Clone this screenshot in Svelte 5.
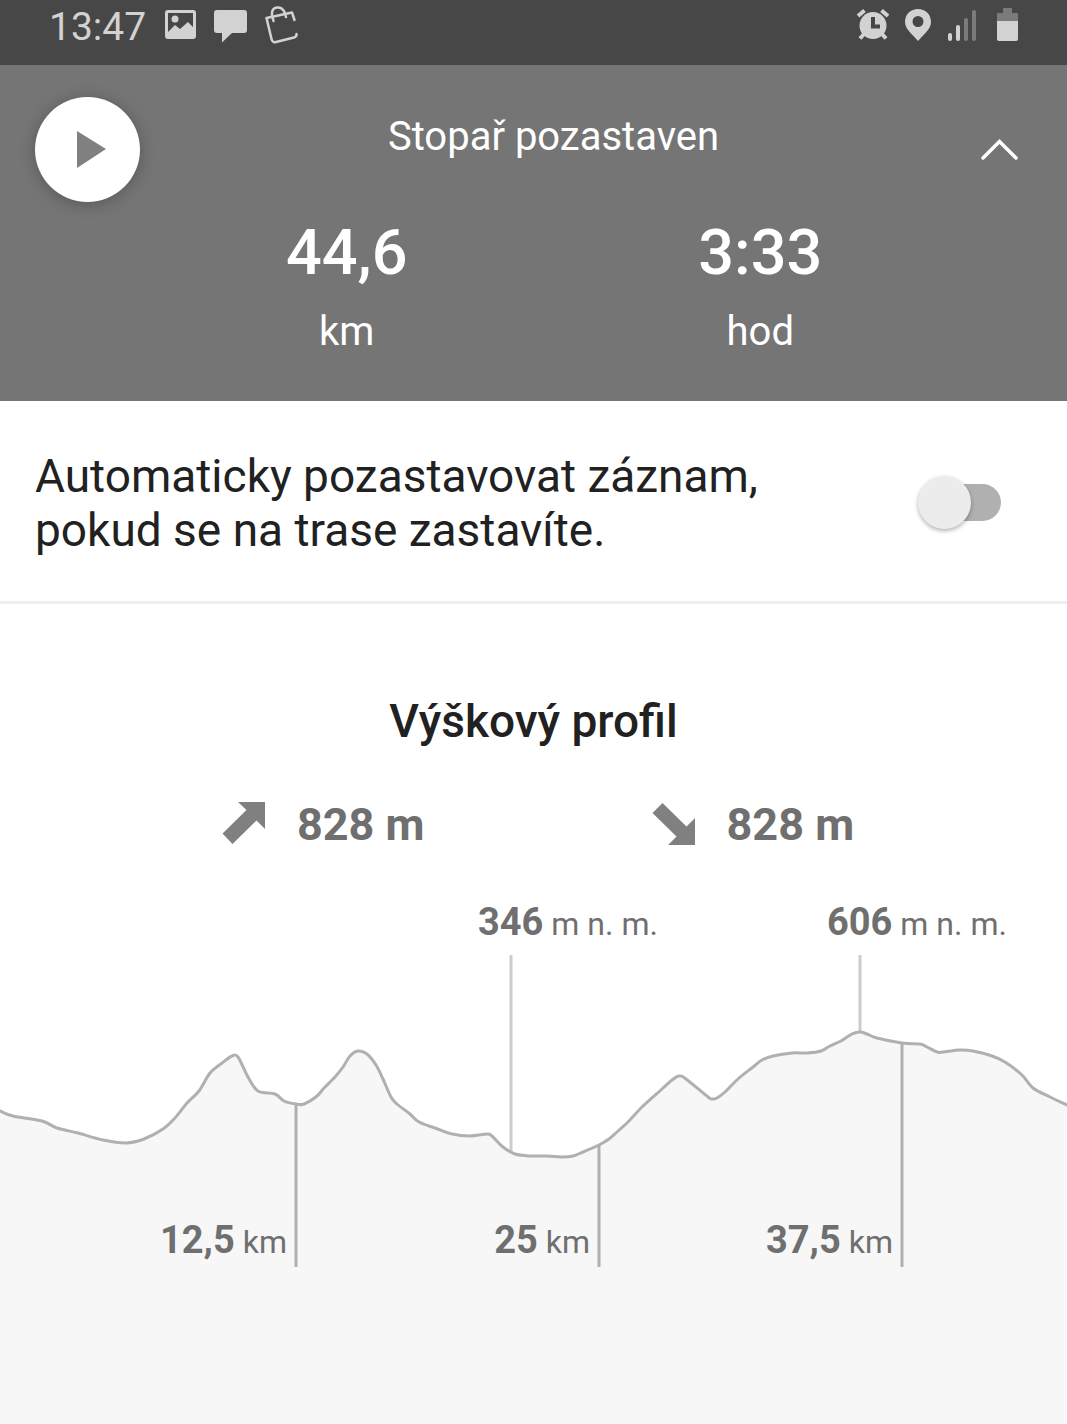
<svelte:head>
	<title>Stopař</title>
</svelte:head>

<script>
	let paused = $state(true);
	let expanded = $state(true);
	let autoPause = $state(false);

	const chartHeight = 544;

	const points = [
		[-4, 230], [0, 231], [13, 236], [42, 241], [57, 248], [78, 253], [103, 260], [126, 263],
		[144, 259], [163, 249], [175, 238], [187, 223], [199, 211], [210, 193], [222, 183],
		[232, 176], [238, 177], [248, 197], [258, 211], [275, 214], [284, 221], [296, 224],
		[304, 224], [317, 216], [324, 208], [335, 197], [343, 187], [350, 176], [358, 171],
		[367, 174], [376, 185], [383, 199], [391, 217], [397, 224], [410, 234], [419, 242],
		[435, 248], [452, 254], [470, 256], [487, 254], [492, 256], [503, 267], [515, 274],
		[531, 276], [547, 276], [563, 277], [573, 276], [583, 272], [599, 265],
		[609, 259], [617, 252], [628, 242], [642, 227], [662, 209], [672, 200], [679, 196],
		[686, 199], [708, 217], [712, 219], [717, 218], [725, 212], [738, 199], [753, 187],
		[762, 180], [773, 176], [792, 173], [807, 173], [821, 171], [830, 166], [841, 161],
		[852, 154], [860, 152], [867, 154], [877, 158], [902, 163], [920, 164], [927, 167],
		[937, 172], [943, 172], [960, 170], [973, 171], [992, 176], [1005, 182], [1022, 195],
		[1033, 208], [1050, 217], [1067, 225], [1071, 227]
	];

	const peaks = [
		{ x: 511, y: 272, label: '346' },
		{ x: 860, y: 151, label: '606' }
	];

	const distances = [
		{ x: 296, y: 224, label: '12,5' },
		{ x: 599, y: 265, label: '25' },
		{ x: 902, y: 163, label: '37,5' }
	];

	// smooth curve through all points
	function curve(p) {
		let d = `M${p[0][0]},${p[0][1]}`;
		for (let i = 0; i < p.length - 1; i++) {
			const a = p[i - 1] || p[i];
			const b = p[i];
			const c = p[i + 1];
			const e = p[i + 2] || c;
			d += `C${b[0] + (c[0] - a[0]) / 6},${b[1] + (c[1] - a[1]) / 6} ${c[0] - (e[0] - b[0]) / 6},${c[1] - (e[1] - b[1]) / 6} ${c[0]},${c[1]}`;
		}
		return d;
	}

	const line = curve(points);
	const area = `${line}V${chartHeight}H-4Z`;
</script>

<div class="app">
	<div class="status">
		<span class="clock">13:47</span>
		<svg class="picture" width="32" height="30" viewBox="0 0 32 30">
			<path fill="#d2d2d2" fill-rule="evenodd" d="M3 0H28Q31 0 31 3V26Q31 29 28 29H3Q0 29 0 26V3Q0 0 3 0ZM3 3V22L10 15L15 19L23 12L28 17V3Z" />
			<circle cx="10" cy="9" r="3.5" fill="#d2d2d2" />
		</svg>
		<svg class="bubble" width="34" height="33" viewBox="0 0 34 33">
			<path fill="#d2d2d2" d="M3 0H30Q33 0 33 3V20Q33 23 30 23H18L8 32.500V23H3Q0 23 0 20V3Q0 0 3 0Z" />
		</svg>
		<svg class="bag" width="34" height="38" viewBox="0 0 34 38" fill="none" stroke="#d2d2d2" stroke-width="2.5" stroke-linecap="round" stroke-linejoin="round">
			<path d="M29.500 14L27 6.500L1.500 12L6.500 33Q7.500 37 11 36L29 31.500Q32 30.500 31.500 28" />
			<path d="M8.500 15L7 9Q6.500 2 12 1.500Q17 1 19.500 6L21 11" />
		</svg>
		<div class="spacer"></div>
		<svg class="alarm" width="34" height="32" viewBox="0 0 34 32">
			<circle cx="17" cy="17.500" r="13.500" fill="#d2d2d2" />
			<path d="M2 8L8.500 2.500M32 8L25.500 2.500M8 26L4 30.500M26 26L30 30.500" stroke="#d2d2d2" stroke-width="4" />
			<path d="M17 9V18.500H24" fill="none" stroke="#474747" stroke-width="4" />
		</svg>
		<svg class="pin" width="26" height="32" viewBox="0 0 26 32">
			<path fill="#d2d2d2" fill-rule="evenodd" d="M13 0C6 0 0 5 0 13C0 20 7 25 13 32C19 25 26 20 26 13C26 5 20 0 13 0ZM13 7A5.500 5.500 0 1 1 13 18A5.500 5.500 0 1 1 13 7Z" />
		</svg>
		<svg class="signal" width="28" height="32" viewBox="0 0 28 32">
			<rect x="0" y="23" width="4" height="8" rx="2" fill="#d2d2d2" />
			<rect x="8" y="15" width="4" height="16" rx="2" fill="#d2d2d2" />
			<rect x="16" y="8" width="4" height="23" rx="2" fill="#7b7b7b" />
			<rect x="24" y="0" width="4" height="31" rx="2" fill="#7b7b7b" />
		</svg>
		<svg class="battery" width="21" height="33" viewBox="0 0 21 33">
			<path fill="#7b7b7b" d="M6 5V1Q6 0 7 0H14Q15 0 15 1V5H20Q21 5 21 6V13H0V6Q0 5 1 5Z" />
			<path fill="#d2d2d2" d="M0 13H21V31Q21 33 19 33H2Q0 33 0 31Z" />
		</svg>
	</div>

	<header>
		<button class="play" aria-label="Pokračovat" onclick={() => (paused = !paused)}>
			<svg width="29" height="37" viewBox="0 0 29 37"><path d="M0 0L29 18L0 37Z" fill="#808080" /></svg>
		</button>
		<div class="tracker">
			<h1>Stopař pozastaven</h1>
			<div class="stats">
				<div class="stat"><strong>44,6</strong><span>km</span></div>
				<div class="stat"><strong>3:33</strong><span>hod</span></div>
			</div>
		</div>
		<button class="collapse" aria-label="Sbalit" aria-expanded={expanded} onclick={() => (expanded = !expanded)}>
			<svg width="38" height="24" viewBox="0 0 38 24"><path d="M3 21L19.500 4.500L36 21" fill="none" stroke="#fff" stroke-width="3.5" stroke-linecap="round" /></svg>
		</button>
	</header>

	<div class="setting">
		<label for="auto_pause">Automaticky pozastavovat záznam, pokud se na trase zastavíte.</label>
		<input id="auto_pause" class="switch" type="checkbox" role="switch" bind:checked={autoPause}>
	</div>

	<section>
		<h2>Výškový profil</h2>
		<div class="climbs">
			<div class="climb">
				<svg width="52" height="48" viewBox="0 0 52 48"><path d="M25 1H52V28L43.500 19.500L19.500 43L9.500 32.500L33.500 9Z" fill="#808080" /></svg>
				<strong>828 m</strong>
			</div>
			<div class="climb">
				<svg width="52" height="48" viewBox="0 0 52 48"><path d="M25 44H52V17L43.500 25.500L19.500 2L9.500 12L33.500 35.500Z" fill="#808080" /></svg>
				<strong>828 m</strong>
			</div>
		</div>
		<svg class="chart" viewBox="0 0 1067 {chartHeight}">
			<path d={area} fill="#f7f7f7" />
			{#each peaks as p}
				<line x1={p.x} x2={p.x} y1="75" y2={p.y} stroke="#cccccc" stroke-width="3" />
				<text x={p.x - 33} y="55"><tspan class="value">{p.label}</tspan> m n. m.</text>
			{/each}
			{#each distances as d}
				<line x1={d.x} x2={d.x} y1={d.y} y2="387" stroke="#b0b0b0" stroke-width="3" />
				<text x={d.x - 9} y="373" text-anchor="end"><tspan class="value">{d.label}</tspan> km</text>
			{/each}
			<path d={line} fill="none" stroke="#b0b0b0" stroke-width="3" />
		</svg>
	</section>
</div>

<style>
	:global(body) {
		background: #f7f7f7;
	}
	.app {
		background: #fff;
		color: #212121;
		font-family: Roboto, "Noto Sans", sans-serif;
	}
	.status {
		display: flex;
		align-items: flex-start;
		height: 65px;
		box-sizing: border-box;
		padding: 6px 49px 0 49px;
		background: #474747;
		color: #d2d2d2;
	}
	.clock {
		font-size: 39px;
		line-height: 42px;
		margin-right: 19px;
	}
	.picture, .bubble {
		margin-top: 4px;
		margin-right: 17px;
	}
	.spacer {
		flex: 1;
	}
	.alarm {
		margin: 2px 15px 0 0;
	}
	.pin {
		margin: 3px 17px 0 0;
	}
	.signal {
		margin: 4px 21px 0 0;
	}
	.battery {
		margin-top: 2px;
	}
	header {
		display: grid;
		grid-template-columns: 140px 1fr 100px;
		align-items: start;
		min-height: 336px;
		background: #757575;
		color: #fff;
	}
	button {
		display: flex;
		align-items: center;
		justify-content: center;
		padding: 0;
		border: 0;
		background: none;
		cursor: pointer;
	}
	.play {
		justify-self: end;
		width: 105px;
		height: 105px;
		margin-top: 32px;
		padding-left: 7px;
		border-radius: 50%;
		background: #fff;
		box-shadow: 0 2px 16px rgba(0, 0, 0, 0.25);
	}
	.collapse {
		width: 64px;
		height: 64px;
		margin-top: 52px;
	}
	h1 {
		margin: 48px 0 0;
		font-size: 40px;
		line-height: 48px;
		font-weight: 400;
		text-align: center;
	}
	.stats {
		display: grid;
		grid-template-columns: 1fr 1fr;
		margin-top: 54px;
	}
	.stat {
		display: flex;
		flex-direction: column;
		align-items: center;
		font-size: 40px;
		line-height: 48px;
	}
	.stat strong {
		font-size: 63px;
		line-height: 76px;
		font-weight: 500;
		margin-bottom: 17px;
	}
	.setting {
		display: flex;
		align-items: center;
		justify-content: space-between;
		min-height: 203px;
		box-sizing: border-box;
		padding: 3px 66px 0 35px;
		border-bottom: 3px solid #eeeeee;
	}
	label {
		max-width: 760px;
		font-size: 46px;
		line-height: 54px;
	}
	.switch {
		appearance: none;
		display: flex;
		align-items: center;
		flex: none;
		width: 74px;
		height: 37px;
		margin: 0;
		border-radius: 19px;
		background: #b0b0b0;
		cursor: pointer;
	}
	.switch::before {
		content: "";
		flex: none;
		width: 53px;
		height: 53px;
		margin-left: -9px;
		border-radius: 50%;
		background: #ececec;
		box-shadow: 0 2px 4px rgba(0, 0, 0, 0.3);
	}
	.switch:checked::before {
		margin-left: 30px;
	}
	h2 {
		margin: 0;
		padding-top: 90px;
		font-size: 46px;
		line-height: 54px;
		font-weight: 500;
		text-align: center;
	}
	.climbs {
		display: flex;
		justify-content: center;
		gap: 218px;
		margin-top: 50px;
	}
	.climb {
		display: flex;
		align-items: center;
		gap: 32px;
		color: #6f6f6f;
		font-size: 45px;
		line-height: 54px;
	}
	.climb strong {
		font-weight: 700;
	}
	.chart {
		display: block;
		width: 100%;
		margin-top: 28px;
	}
	.chart text {
		fill: #6f6f6f;
		font-size: 32px;
	}
	.chart .value {
		font-size: 38px;
		font-weight: 700;
	}
</style>
